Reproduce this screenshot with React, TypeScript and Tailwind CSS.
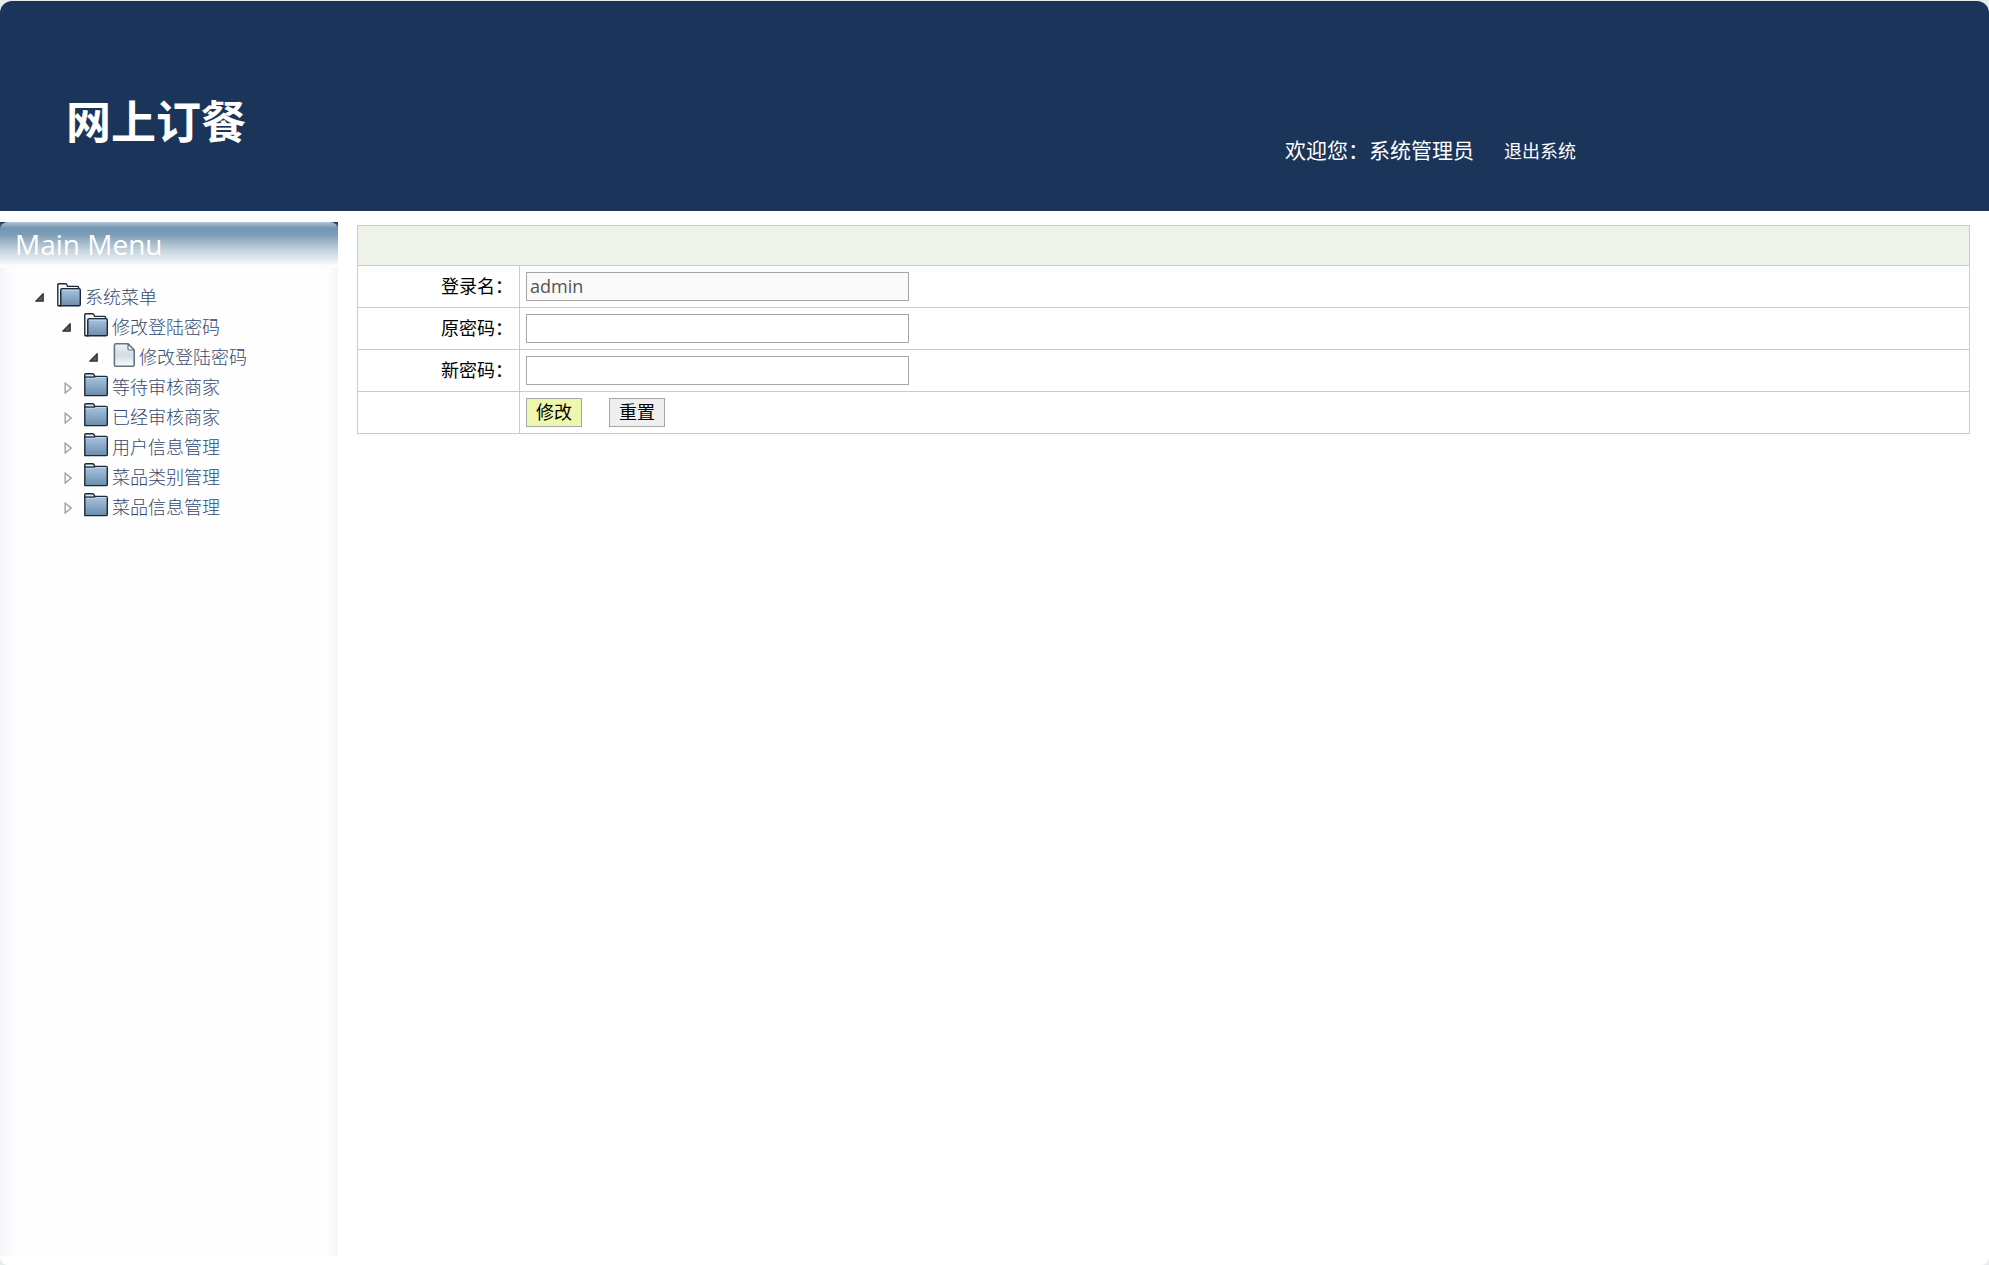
import React, { useState } from 'react';

type IconKind = 'open' | 'closed' | 'file';

interface MenuNode {
  id: string;
  label: string;
  icon: IconKind;
  expanded: boolean;
  children?: MenuNode[];
}

const menu: MenuNode[] = [
  {
    id: 'root',
    label: '系统菜单',
    icon: 'open',
    expanded: true,
    children: [
      {
        id: 'password',
        label: '修改登陆密码',
        icon: 'open',
        expanded: true,
        children: [{ id: 'password-edit', label: '修改登陆密码', icon: 'file', expanded: true }],
      },
      { id: 'pending', label: '等待审核商家', icon: 'closed', expanded: false },
      { id: 'approved', label: '已经审核商家', icon: 'closed', expanded: false },
      { id: 'users', label: '用户信息管理', icon: 'closed', expanded: false },
      { id: 'categories', label: '菜品类别管理', icon: 'closed', expanded: false },
      { id: 'dishes', label: '菜品信息管理', icon: 'closed', expanded: false },
    ],
  },
];

const Gradients = () => (
  <svg className="absolute h-0 w-0" aria-hidden="true">
    <defs>
      <linearGradient id="folder-fill" x1="0" y1="0" x2="0" y2="1">
        <stop offset="0" stopColor="#a9c4e3" />
        <stop offset="1" stopColor="#6c8cab" />
      </linearGradient>
      <linearGradient id="file-fill" x1="0" y1="0" x2="0" y2="1">
        <stop offset="0" stopColor="#eef3f7" />
        <stop offset="0.5" stopColor="#d0dde8" />
        <stop offset="1" stopColor="#f9fbfc" />
      </linearGradient>
    </defs>
  </svg>
);

const NodeIcon = ({ kind }: { kind: IconKind }) => {
  if (kind === 'open') {
    return (
      <svg className="h-6 w-6 shrink-0" viewBox="0 0 24 24">
        <path d="M0.8 22V2Q0.8 0.8 2 0.8H8.6Q9.6 0.8 10 2L10.6 3.4H20.4Q21.6 3.4 21.6 4.6V8H4V22.8H1.6Q0.8 22.8 0.8 22Z" fill="#f6f8fa" stroke="#1c2a36" strokeWidth="1.4" />
        <path d="M3.8 7Q3.8 5.8 5 5.8H22Q23.3 5.8 23.3 7V21.6Q23.3 22.8 22 22.8H2.4Q3.8 22.4 3.8 20.6Z" fill="url(#folder-fill)" stroke="#1c2a36" strokeWidth="1.4" />
        <path d="M5 7.1H22.2" stroke="#c6d9ee" strokeWidth="1" />
      </svg>
    );
  }
  if (kind === 'closed') {
    return (
      <svg className="h-6 w-6 shrink-0" viewBox="0 0 24 24">
        <path d="M0.8 5V2Q0.8 0.8 2 0.8H8.6Q9.8 0.8 10.2 2L11 4.5H0.8Z" fill="#dfe9f2" stroke="#1c2a36" strokeWidth="1.4" />
        <path d="M0.8 4.2H10.4L11 3.4H22Q23.3 3.4 23.3 4.6V21.4Q23.3 22.6 22 22.6H0.8Z" fill="url(#folder-fill)" stroke="#1c2a36" strokeWidth="1.4" />
        <path d="M1.6 5.2H10.8L11.6 4.5H22.4" fill="none" stroke="#c6d9ee" strokeWidth="1" />
      </svg>
    );
  }
  return (
    <svg className="h-6 w-6 shrink-0" viewBox="0 0 24 24">
      <path d="M5 0.8H17L23.2 7V21.8Q23.2 23.2 21.8 23.2H4.8Q3.4 23.2 3.4 21.8V2.4Q3.4 0.8 5 0.8Z" fill="url(#file-fill)" stroke="#66747f" strokeWidth="1.6" />
      <path d="M17 1V5.8Q17 7 18.2 7H23Z" fill="#ffffff" stroke="#66747f" strokeWidth="1.2" />
    </svg>
  );
};

const Arrow = ({ expanded }: { expanded: boolean }) => (
  <svg className="h-3 w-3" viewBox="0 0 12 12">
    {expanded ? (
      <path d="M9.2 1.6V9.2H1.8Z" fill="#5a5a5a" stroke="#333333" strokeWidth="1.3" strokeLinejoin="round" />
    ) : (
      <path d="M4.2 1.2V11L10.2 6.1Z" fill="#ffffff" stroke="#a6a6a6" strokeWidth="1.5" />
    )}
  </svg>
);

const TreeItem = ({ node }: { node: MenuNode }) => {
  const [expanded, setExpanded] = useState(node.expanded);

  return (
    <li>
      <div className="flex h-[30px] items-start">
        <button
          type="button"
          aria-label={node.label}
          aria-expanded={expanded}
          onClick={() => setExpanded(!expanded)}
          className="mt-[9px] mr-[11px] shrink-0"
        >
          <Arrow expanded={expanded} />
        </button>
        <NodeIcon kind={node.icon} />
        <a href="#" className="ml-1 pt-0.5 text-lg leading-6 font-light whitespace-nowrap text-[#35496f]">
          {node.label}
        </a>
      </div>
      {expanded && node.children && (
        <ul className="pl-[27px]">
          {node.children.map((child) => (
            <TreeItem key={child.id} node={child} />
          ))}
        </ul>
      )}
    </li>
  );
};

const Header = () => (
  <header className="flex h-[210px] rounded-t-xl bg-[#1b3459] text-white">
    <h1 className="w-[64.6%] pt-[89px] pl-[66px] text-[45px] leading-16 font-bold">网上订餐</h1>
    <div className="flex items-baseline gap-[30px] pt-[133px]">
      <span className="text-[21px] leading-8">欢迎您：系统管理员</span>
      <a href="#" className="text-lg">
        退出系统
      </a>
    </div>
  </header>
);

const Sidebar = () => (
  <aside className="mb-[9px] w-[338px] shrink-0 bg-[linear-gradient(to_right,#f3f5f8,#fdfdfe_12px,#fefefe_16px,#fefefe_322px,#fbfcfd_330px,#f3f5f8)]">
    <div className="bg-[linear-gradient(to_bottom,#1b3459,#7497b3_8px,transparent_8px)]">
      <div className="h-[46px] rounded-t-lg bg-[linear-gradient(to_bottom,#b3c5d3,#7497b3_6px,#7a9cb6_12px,#c3d2dc_28px,#fdfdfe_44px)] pl-[15px]">
        <h2 className="text-[28px] leading-11 text-white">Main Menu</h2>
      </div>
    </div>
    <nav className="pt-[15px] pl-[34px]">
      <ul>
        {menu.map((node) => (
          <TreeItem key={node.id} node={node} />
        ))}
      </ul>
    </nav>
  </aside>
);

const cell = 'border border-[#c9d3a5]';
const labelCell = 'border border-[#c9d3a5] pr-1.5 pb-0.5 text-right';
const inputClass = 'block h-[29px] w-[383px] border border-[#a6a6a6] px-[3px] pb-0.5 text-lg leading-6 outline-none';
const buttonClass = 'h-[29px] w-14 border border-[#a6a6a6] pb-0.5 text-lg leading-6 whitespace-nowrap';

const PasswordForm = () => {
  const [oldPassword, setOldPassword] = useState('');
  const [newPassword, setNewPassword] = useState('');

  const handleReset = () => {
    setOldPassword('');
    setNewPassword('');
  };

  return (
    <form className="mt-[3px] mr-[19px] ml-[19px] flex-1" onSubmit={(e) => e.preventDefault()} onReset={handleReset}>
      <table className="w-full table-fixed border-collapse text-lg text-black">
        <colgroup>
          <col className="w-[162px]" />
          <col />
        </colgroup>
        <thead>
          <tr className="h-10 bg-[#edf3e9]">
            <td colSpan={2} className={cell}></td>
          </tr>
        </thead>
        <tbody>
          <tr className="h-[42px]">
            <td className={labelCell}>
              <label htmlFor="username">登录名：</label>
            </td>
            <td className={`${cell} px-1.5`}>
              <input id="username" type="text" value="admin" disabled className={`${inputClass} bg-[#fafafa] text-[#545454]`} />
            </td>
          </tr>
          <tr className="h-[42px]">
            <td className={labelCell}>
              <label htmlFor="old-password">原密码：</label>
            </td>
            <td className={`${cell} px-1.5`}>
              <input
                id="old-password"
                type="password"
                value={oldPassword}
                onChange={(e) => setOldPassword(e.target.value)}
                className={`${inputClass} bg-white`}
              />
            </td>
          </tr>
          <tr className="h-[42px]">
            <td className={labelCell}>
              <label htmlFor="new-password">新密码：</label>
            </td>
            <td className={`${cell} px-1.5`}>
              <input
                id="new-password"
                type="password"
                value={newPassword}
                onChange={(e) => setNewPassword(e.target.value)}
                className={`${inputClass} bg-white`}
              />
            </td>
          </tr>
          <tr className="h-[42px]">
            <td className={cell}></td>
            <td className={`${cell} px-1.5`}>
              <div className="flex gap-[27px]">
                <button type="submit" className={`${buttonClass} bg-[#eff6ad]`}>
                  修改
                </button>
                <button type="reset" className={`${buttonClass} bg-[#efefef]`}>
                  重置
                </button>
              </div>
            </td>
          </tr>
        </tbody>
      </table>
    </form>
  );
};

const App: React.FC = () => {
  return (
    <div className="flex min-h-screen flex-col bg-[#e6ebee] pt-px font-['Open_Sans','Noto_Sans_CJK_SC',sans-serif]">
      <Gradients />
      <div className="flex flex-1 flex-col rounded-t-xl rounded-b-lg bg-white">
        <Header />
        <main className="mt-[11px] flex flex-1">
          <Sidebar />
          <PasswordForm />
        </main>
      </div>
    </div>
  );
};

export default App;
